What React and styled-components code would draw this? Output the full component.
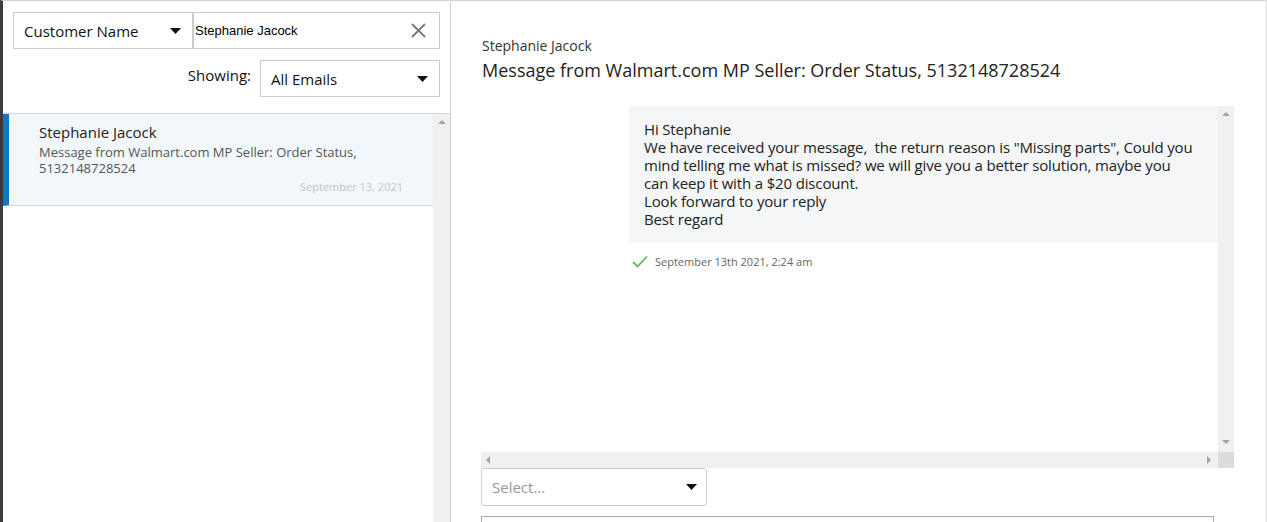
import React from "react";
import styled, { createGlobalStyle } from "styled-components";

const Global = createGlobalStyle`
  html, body {
    margin: 0;
    padding: 0;
    background: #fff;
    overflow: hidden;
  }
  body {
    font-family: "Open Sans", "Noto Sans", sans-serif;
    color: #222;
  }
`;

function Caret() {
  return (
    <svg width="11" height="6" viewBox="0 0 11 6">
      <path d="M0 0 L11 0 L5.5 6 Z" fill="#111" />
    </svg>
  );
}

function ClearIcon() {
  return (
    <svg width="15" height="15" viewBox="0 0 15 15">
      <path d="M1 1 L14 14 M14 1 L1 14" stroke="#777" strokeWidth="1.8" />
    </svg>
  );
}

function Check() {
  return (
    <svg width="16" height="13" viewBox="0 0 16 13">
      <path d="M1 7 L5.5 11.5 L15 1.5" stroke="#5cb85c" strokeWidth="1.8" fill="none" />
    </svg>
  );
}

function Arrow({ dir }) {
  const paths = {
    up: "M0 5 L4 1 L8 5 Z",
    down: "M0 1 L8 1 L4 5 Z",
    left: "M5 0 L5 8 L1 4 Z",
    right: "M1 0 L1 8 L5 4 Z",
  };
  return (
    <svg width="8" height="8" viewBox="0 0 8 8">
      <path d={paths[dir]} fill="#a3a3a3" />
    </svg>
  );
}

const messageLines = [
  "Hi Stephanie",
  'We have received your message,\u00a0 the return reason is "Missing parts", Could you',
  "mind telling me what is missed? we will give you a better solution, maybe you",
  "can keep it with a $20 discount.",
  "Look forward to your reply",
  "Best regard",
];

export default function App() {
  return (
    <>
      <Global />
      <Page>
        <Frame>
          <Sidebar>
            <Filters>
              <FilterRow>
                <Dropdown width="180px">
                  <span>Customer Name</span>
                  <Caret />
                </Dropdown>
                <SearchBox>
                  <span>Stephanie Jacock</span>
                  <ClearIcon />
                </SearchBox>
              </FilterRow>
              <ShowRow>
                <ShowLabel>Showing:</ShowLabel>
                <Dropdown width="180px">
                  <span>All Emails</span>
                  <Caret />
                </Dropdown>
              </ShowRow>
            </Filters>
            <ListArea>
              <List>
                <Item active>
                  <ItemName>Stephanie Jacock</ItemName>
                  <ItemSubject>
                    Message from Walmart.com MP Seller: Order Status,
                    <br />
                    5132148728524
                  </ItemSubject>
                  <ItemDate>September 13, 2021</ItemDate>
                </Item>
              </List>
              <VScroll>
                <ArrowSlot>
                  <Arrow dir="up" />
                </ArrowSlot>
              </VScroll>
            </ListArea>
          </Sidebar>
          <Detail>
            <Sender>Stephanie Jacock</Sender>
            <Subject>Message from Walmart.com MP Seller: Order Status, 5132148728524</Subject>
            <Thread>
              <ThreadBody>
                <Bubble>
                  {messageLines.map((line, i) => (
                    <Line key={i}>{line}</Line>
                  ))}
                </Bubble>
                <Stamp>
                  <Check />
                  <span>September 13th 2021, 2:24 am</span>
                </Stamp>
              </ThreadBody>
              <ThreadVScroll>
                <Arrow dir="up" />
                <Arrow dir="down" />
              </ThreadVScroll>
              <ThreadHScroll>
                <Arrow dir="left" />
                <Arrow dir="right" />
              </ThreadHScroll>
              <Corner />
            </Thread>
            <TemplateSelect>
              <span>Select...</span>
              <Caret />
            </TemplateSelect>
            <Reply />
          </Detail>
        </Frame>
      </Page>
    </>
  );
}

const Page = styled.div`
  width: 1267px;
  height: 522px;
  padding-top: 1px;
  box-sizing: border-box;
  display: flex;
`;

const Frame = styled.div`
  flex: 1;
  display: flex;
  border-top: 1px solid #d2d2d2;
  border-left: 3px solid #3a3a40;
  border-right: 2px solid #ececec;
  margin-top: -1px;
  padding-top: 1px;
  box-sizing: border-box;
  overflow: hidden;
`;

const Sidebar = styled.div`
  width: 447px;
  flex: none;
  display: flex;
  flex-direction: column;
  border-right: 1px solid #cfcfcf;
`;

const Filters = styled.div`
  height: 111px;
  flex: none;
  padding: 10px 10px 0 10px;
  box-sizing: border-box;
  display: flex;
  flex-direction: column;
  gap: 11px;
`;

const FilterRow = styled.div`
  display: flex;
`;

const Dropdown = styled.div`
  width: ${(p) => p.width};
  height: 37px;
  flex: none;
  box-sizing: border-box;
  border: 1px solid #ccc;
  display: flex;
  align-items: center;
  justify-content: space-between;
  padding: 0 11px 0 10px;
  font-size: 15px;
  color: #111;
`;

const SearchBox = styled.div`
  flex: 1;
  height: 37px;
  box-sizing: border-box;
  border: 1px solid #ccc;
  display: flex;
  align-items: center;
  justify-content: space-between;
  padding: 0 13px 0 1px;
  font-family: "Liberation Sans", Arial, sans-serif;
  font-size: 13px;
  color: #000;
`;

const ShowRow = styled.div`
  display: flex;
  justify-content: flex-end;
  align-items: flex-start;
  gap: 9px;
`;

const ShowLabel = styled.span`
  font-size: 15px;
  color: #111;
  line-height: 20px;
  margin-top: 5px;
`;

const ListArea = styled.div`
  flex: 1;
  display: flex;
  border-top: 1px solid #d6d6d6;
`;

const List = styled.div`
  flex: 1;
`;

const Item = styled.div`
  height: 92px;
  box-sizing: border-box;
  background: ${(p) => (p.active ? "#f2f7fb" : "#fff")};
  border-left: 6px solid ${(p) => (p.active ? "#0b79c0" : "transparent")};
  border-bottom: 1px solid #d3d3d3;
  padding: 8px 30px 0 30px;
  display: flex;
  flex-direction: column;
`;

const ItemName = styled.div`
  font-size: 15px;
  line-height: 20px;
  color: #222;
`;

const ItemSubject = styled.div`
  font-size: 13px;
  line-height: 16px;
  color: #555;
  margin-top: 2px;
`;

const ItemDate = styled.div`
  font-size: 11px;
  color: #c4c4c4;
  text-align: right;
  margin-top: 3px;
`;

const VScroll = styled.div`
  width: 17px;
  background: #f0f0f0;
`;

const ArrowSlot = styled.div`
  height: 17px;
  display: flex;
  align-items: center;
  justify-content: center;
`;

const Detail = styled.div`
  flex: 1;
  padding: 34px 30px 0 30px;
  display: flex;
  flex-direction: column;
`;

const Sender = styled.div`
  font-size: 14px;
  line-height: 20px;
  color: #333;
  padding-left: 1px;
`;

const Subject = styled.div`
  font-size: 18px;
  line-height: 24px;
  color: #222;
  margin-top: 2px;
  padding-left: 1px;
`;

const Thread = styled.div`
  flex: none;
  margin-top: 24px;
  width: 753px;
  height: 362px;
  display: grid;
  grid-template-columns: 1fr 16px;
  grid-template-rows: 1fr 16px;
`;

const ThreadBody = styled.div`
  display: flex;
  flex-direction: column;
  align-items: flex-end;
  overflow: hidden;
`;

const Bubble = styled.div`
  width: 589px;
  box-sizing: border-box;
  background: #f5f6f7;
  padding: 14px 15px 15px 15px;
  font-size: 15px;
  line-height: 18px;
  letter-spacing: -0.15px;
  color: #222;
`;

const Line = styled.div`
  white-space: nowrap;
`;

const Stamp = styled.div`
  align-self: stretch;
  display: flex;
  align-items: center;
  gap: 7px;
  padding: 11px 0 0 151px;
  font-size: 11px;
  color: #666;
`;

const ThreadVScroll = styled.div`
  background: #f0f0f0;
  display: flex;
  flex-direction: column;
  justify-content: space-between;
  align-items: center;
  padding: 5px 0;
`;

const ThreadHScroll = styled.div`
  background: #f0f0f0;
  display: flex;
  justify-content: space-between;
  align-items: center;
  padding: 0 4px;
`;

const Corner = styled.div`
  background: #dcdcdc;
`;

const TemplateSelect = styled.div`
  flex: none;
  width: 226px;
  height: 38px;
  box-sizing: border-box;
  border: 1px solid #ccc;
  border-radius: 3px;
  display: flex;
  align-items: center;
  justify-content: space-between;
  padding: 0 9px 0 10px;
  font-size: 15px;
  color: #999;
`;

const Reply = styled.div`
  flex: none;
  margin-top: 10px;
  width: 733px;
  height: 60px;
  box-sizing: border-box;
  border: 1px solid #aaa;
`;
